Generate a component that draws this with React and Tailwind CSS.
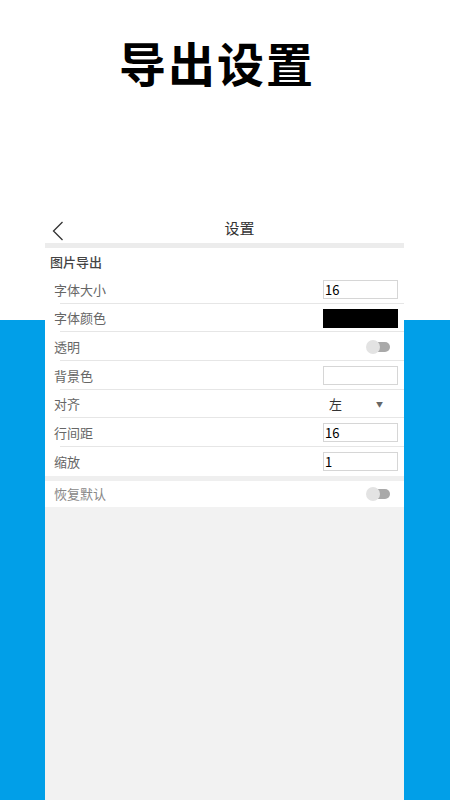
import React from 'react';

const rows = [
  { label: '字体大小', type: 'input', value: '16' },
  { label: '字体颜色', type: 'color' },
  { label: '透明', type: 'toggle' },
  { label: '背景色', type: 'input', value: '' },
  { label: '对齐', type: 'select', value: '左' },
  { label: '行间距', type: 'input', value: '16' },
  { label: '缩放', type: 'input', value: '1', last: true },
];

const Toggle = () => (
  <div className="relative w-[24px] h-[14px] mr-[8px]">
    <div className="absolute right-0 top-[2px] w-[18px] h-[10px] rounded-full bg-[#a9a9a9]"></div>
    <div className="absolute left-0 top-0 w-[14px] h-[14px] rounded-full bg-[#e3e3e3]"></div>
  </div>
);

const Control = ({ row }) => {
  if (row.type === 'input') {
    return (
      <div className="w-[75px] h-[19px] border border-[#d6d6d6] bg-white flex items-center px-[1px] text-[13px] text-black">
        {row.value}
      </div>
    );
  }
  if (row.type === 'color') {
    return <div className="w-[75px] h-[19px] bg-black"></div>;
  }
  if (row.type === 'toggle') return <Toggle />;
  return (
    <div className="w-[75px] flex items-center justify-between pl-[6px] pr-[15px] text-[13px] text-[#333]">
      <span>{row.value}</span>
      <span className="text-[7px] text-[#666]">▼</span>
    </div>
  );
};

export default function App() {
  return (
    <div
      className="w-[450px] h-[800px] overflow-hidden bg-[linear-gradient(to_bottom,#ffffff_320px,#019fe8_320px)]"
      style={{ fontFamily: '"Noto Sans CJK SC", "Noto Sans", sans-serif' }}
    >
      {/* Title */}
      <div className="h-[213px] flex justify-center pr-[16px] pt-[30px]">
        <h1 className="text-[47px] leading-[64px] font-semibold text-black tracking-[2px]">导出设置</h1>
      </div>

      {/* Panel */}
      <div className="ml-[45px] w-[359px] h-[587px] bg-[#f2f2f2] flex flex-col">
        <div className="bg-white h-[30px] relative flex items-center justify-center pl-[30px]">
          <svg className="absolute left-[7px] top-[8px]" width="12" height="20" viewBox="0 0 12 20">
            <path d="M10.5 1 L1.5 10 L10.5 19" fill="none" stroke="#333" strokeWidth="1.3" />
          </svg>
          <span className="text-[15px] text-[#333]">设置</span>
        </div>
        <div className="h-[5px] bg-[#ececec]"></div>

        <div className="bg-white">
          <div className="h-[27px] flex items-center pl-[5px] text-[13px] text-[#444] font-medium">图片导出</div>
          {rows.map((row, i) => (
            <div key={i} className="pl-[9px] h-[28.7px]">
              <div className="h-full flex items-center justify-between pr-[6px]">
                <span className="text-[13px] text-[#666]">{row.label}</span>
                <Control row={row} />
              </div>
              {!row.last && <div className="-mt-px ml-[6px] h-px bg-[#e6e6e6]"></div>}
            </div>
          ))}
        </div>

        <div className="h-[5px] bg-[#efefef]"></div>
        <div className="bg-white h-[26px] flex items-center justify-between pl-[9px] pr-[6px]">
          <span className="text-[13px] text-[#888]">恢复默认</span>
          <Toggle />
        </div>
        <div className="flex-1 bg-[#f2f2f2]"></div>
      </div>
    </div>
  );
}
